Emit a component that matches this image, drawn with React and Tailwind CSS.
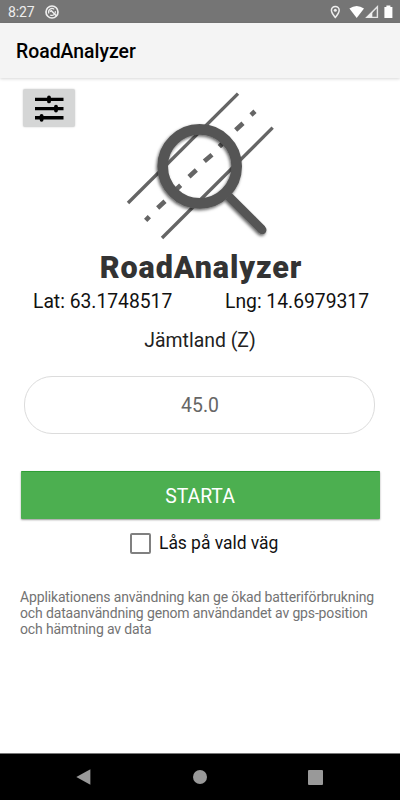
function StatusBar() {
  return (
    <div className="flex h-[23px] items-center bg-[#757575] pl-[8px] text-white">
      <span className="w-[37px] pt-px text-[14px] leading-none tracking-[-0.1px] text-[#eeeeee]">8:27</span>
      <svg className="h-[14px] w-[14px]" viewBox="0 0 14 14" fill="none" stroke="#eeeeee">
        <circle cx="7" cy="7" r="6" strokeWidth="1.7" />
        <path d="M3.9 8.4A3.4 3.4 0 0 1 9.2 4.4M10.3 6.2A3.4 3.4 0 0 1 5.2 9.9" strokeWidth="1.2" />
        <path d="M4.7 6.7L6.3 5.8L11.6 11" strokeWidth="1.5" />
      </svg>
      <svg className="ml-auto mr-[7px] h-[16px] w-[64px]" viewBox="0 0 64 16">
        <path
          d="M6.3 2.4A3.9 3.9 0 0 0 2.4 6.3C2.4 9 6.3 13.4 6.3 13.4S10.2 9 10.2 6.3A3.9 3.9 0 0 0 6.3 2.4Z"
          fill="none"
          stroke="#eeeeee"
          strokeWidth="1.5"
        />
        <circle cx="6.3" cy="6.3" r="1.5" fill="#eeeeee" />
        <path d="M20.4 4.5Q27.7 -0.7 35 4.5L27.7 14Z" fill="#fff" />
        <path d="M48.4 2.8V13.4H37.8Z" fill="none" stroke="#e4e4e4" strokeWidth="1.4" />
        <path d="M37 13.7L43.3 7.4V13.7Z" fill="#eeeeee" />
        <path d="M55.4 3H57.4V1.5H61.4V3H63.4V14H55.4Z" fill="#fff" />
      </svg>
    </div>
  )
}

function Header() {
  return (
    <header className="flex h-[55px] items-center bg-[#f4f4f4] pl-[16px] pt-[2px] shadow-[0_1px_3px_rgba(0,0,0,0.16)]">
      <h1 className="text-[19.4px] font-medium leading-none text-black">RoadAnalyzer</h1>
    </header>
  )
}

function SlidersIcon() {
  return (
    <svg className="h-[27px] w-[30px]" viewBox="0 0 30 27" stroke="#000">
      <path d="M1 4.4H29.5M1 13.6H29.5M1 22.8H29.5" strokeWidth="3.4" />
      <path d="M15 2.4V6.4M22 11.6V15.6M7.6 20.8V24.8" strokeWidth="3.8" strokeLinecap="round" />
    </svg>
  )
}

// A road seen through a magnifying glass
function Logo() {
  return (
    <svg className="h-[160px] w-[180px]" viewBox="0 0 540 480" fill="none">
      <defs>
        <filter id="lens-shadow" x="-20%" y="-20%" width="140%" height="140%">
          <feDropShadow dx="-3" dy="5" stdDeviation="4" floodColor="#000" floodOpacity="0.6" />
        </filter>
      </defs>
      <g stroke="#656565" strokeWidth="10">
        <path d="M54 354L384 26" />
        <path d="M156 459L488 128" />
        <path
          d="M107 406L118 395M143 369L165 349M200 312L212 301M237 275L259 255M283 229L306 209M328 185L339 174M377 135L399 115M423 90L435 79"
          strokeWidth="14"
        />
      </g>
      <g filter="url(#lens-shadow)" stroke="#555">
        <path d="M356 334L456 434" strokeWidth="27" />
        <path d="M452 430L457 435" strokeWidth="25" strokeLinecap="round" />
        <circle cx="269" cy="244" r="111" strokeWidth="32" />
      </g>
    </svg>
  )
}

function NavBar() {
  return (
    <nav className="flex h-[47px] items-center border-t border-[#777] bg-black">
      <svg className="ml-[76px] h-[16px] w-[15px]" viewBox="0 0 15 16" fill="#999">
        <path d="M0.3 8L14.4 0.3V15.7Z" />
      </svg>
      <div className="ml-[102px] h-[14px] w-[14px] rounded-full bg-[#999]" />
      <div className="ml-[101px] h-[15px] w-[15px] rounded-[1px] bg-[#999]" />
    </nav>
  )
}

export default function App() {
  return (
    <div className="flex h-[800px] w-[400px] flex-col overflow-hidden bg-white font-['Roboto',sans-serif]">
      <StatusBar />
      <Header />
      <main className="flex flex-1 flex-col px-[20px] pt-[7px]">
        <div className="flex h-[160px] items-start">
          <button className="ml-[3px] mt-[4px] flex h-[38px] w-[52px] items-center justify-center rounded-[2px] bg-[#d5d6d6] shadow-[0_0_2px_rgba(0,0,0,0.2)]">
            <SlidersIcon />
          </button>
          <div className="ml-[35px] shrink-0">
            <Logo />
          </div>
        </div>
        <h2 className="mt-[5px] h-[36px] whitespace-nowrap pl-[2px] text-center text-[30.5px] font-black leading-[36px] tracking-[0.9px] text-[#333]">
          RoadAnalyzer
        </h2>
        <div className="mt-[4px] flex h-[24px] items-center justify-between pl-[13px] pr-[11px] text-[19.3px] text-[#111]">
          <span>Lat: 63.1748517</span>
          <span>Lng: 14.6979317</span>
        </div>
        <p className="mt-[15px] h-[24px] text-center text-[19.4px] leading-[24px] text-[#222]">Jämtland (Z)</p>
        <div className="ml-[4px] mr-[5px] mt-[23px] flex h-[58px] items-center justify-center rounded-[28px] border border-[#dcdcdc] pl-px pt-[2px] text-[19.4px] text-[#666]">
          45.0
        </div>
        <button className="ml-px mt-[37px] h-[48px] rounded-[1px] border-t border-[#2f9e36] bg-[#4caf50] pr-px pt-[2px] text-[19.4px] text-white shadow-[0_1px_2px_rgba(0,0,0,0.4)]">
          STARTA
        </button>
        <label className="ml-[110px] mt-[12px] flex h-[24px] items-center text-[17.5px] tracking-[-0.05px] text-[#111]">
          <span className="mr-[8px] h-[21px] w-[21px] rounded-[2px] border-2 border-[#808080]" />
          Lås på vald väg
        </label>
        <p className="mt-[34px] whitespace-nowrap text-[14px] leading-[16px] tracking-[-0.145px] text-[#737373]">
          Applikationens användning kan ge ökad batteriförbrukning
          <br />
          och dataanvändning genom användandet av gps-position
          <br />
          och hämtning av data
        </p>
      </main>
      <NavBar />
    </div>
  )
}
